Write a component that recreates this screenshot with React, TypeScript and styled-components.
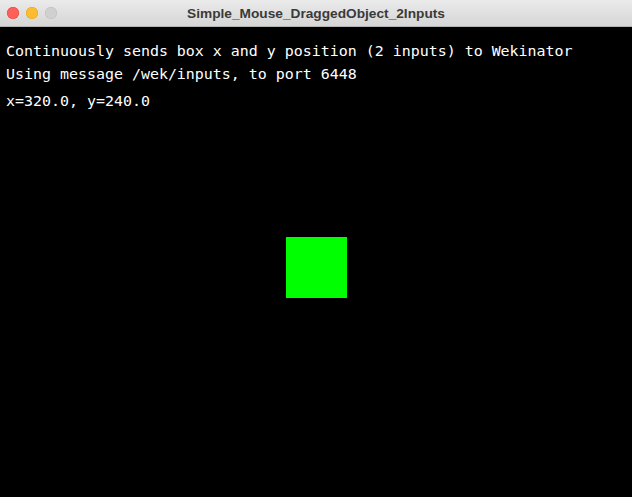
import React from "react";
import styled, { createGlobalStyle } from "styled-components";

const Global = createGlobalStyle`
  html, body { margin: 0; padding: 0; background: #000; }
  body { width: 632px; height: 497px; overflow: hidden; }
`;

const Window = styled.div`
  width: 632px;
  height: 497px;
  display: flex;
  flex-direction: column;
  background: #000;
`;

const TitleBar = styled.div`
  height: 26px;
  flex: none;
  display: flex;
  align-items: center;
  position: relative;
  background: linear-gradient(#ebebeb, #d5d5d5);
  border-bottom: 1px solid #b4b4b4;
  box-sizing: content-box;
`;

const Lights = styled.div`
  display: flex;
  gap: 7px;
  padding-left: 7px;
  position: absolute;
  left: 0;
  top: 7px;
`;

const Light = styled.span<{ $fill: string; $edge: string }>`
  width: 12px;
  height: 12px;
  border-radius: 50%;
  background: ${(p) => p.$fill};
  box-shadow: inset 0 0 0 0.5px ${(p) => p.$edge};
`;

const Title = styled.div`
  flex: 1;
  text-align: center;
  font-family: "Liberation Sans", Arial, sans-serif;
  font-weight: bold;
  font-size: 13.7px;
  color: #3a3a3a;
  padding-left: 0px;
`;

const Canvas = styled.div`
  flex: 1;
  position: relative;
  padding: 13px 6px 0;
  font-family: "DejaVu Sans Mono", monospace;
  font-size: 14.95px;
  line-height: 23px;
  color: #fff;
`;

const Line = styled.div<{ $gap?: number }>`
  margin-top: ${(p) => p.$gap ?? 0}px;
  white-space: pre;
`;

const Box = styled.div`
  position: absolute;
  left: 286px;
  top: 210px;
  width: 61px;
  height: 61px;
  background: #00ff00;
`;

export default function App() {
  return (
    <>
      <Global />
      <Window>
        <TitleBar>
          <Lights>
            <Light $fill="#fe5f57" $edge="#e0443e" />
            <Light $fill="#febc2e" $edge="#dea123" />
            <Light $fill="#d0d0d0" $edge="#bcbcbc" />
          </Lights>
          <Title>Simple_Mouse_DraggedObject_2Inputs</Title>
        </TitleBar>
        <Canvas>
          <Line>Continuously sends box x and y position (2 inputs) to Wekinator</Line>
          <Line>Using message /wek/inputs, to port 6448</Line>
          <Line $gap={4}>x=320.0, y=240.0</Line>
          <Box />
        </Canvas>
      </Window>
    </>
  );
}
